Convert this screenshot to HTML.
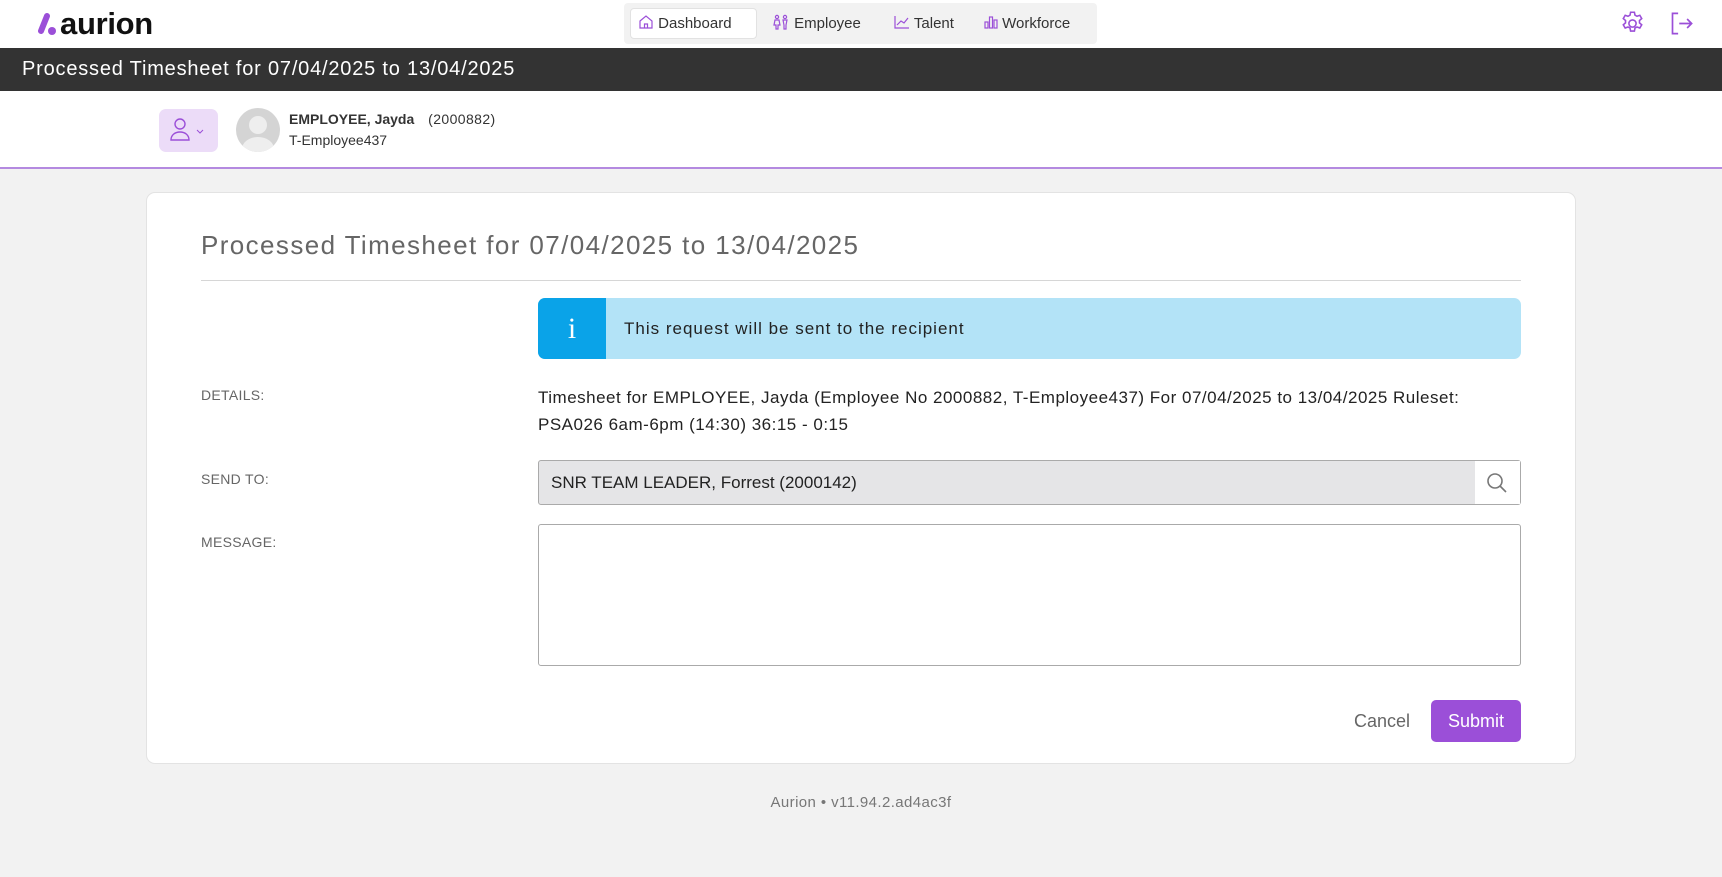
<!DOCTYPE html>
<html><head><meta charset="utf-8"><style>
*{box-sizing:border-box;margin:0;padding:0}
body{width:1722px;height:877px;background:#f2f2f2;font-family:"Liberation Sans",sans-serif;position:relative;overflow:hidden;color:#222}
.abs{position:absolute}
.top{left:0;top:0;width:1722px;height:48px;background:#fff}
.bar{left:0;top:48px;width:1722px;height:43px;background:#333;color:#fff;font-size:20px;line-height:43px;padding-left:22px;letter-spacing:0.8px}
.emp{left:0;top:91px;width:1722px;height:78px;background:#fff;border-bottom:2px solid #b48ae0}
.nav{left:624px;top:3px;width:473px;height:41px;background:#f2f2f2;border-radius:4px}
.nav span{position:absolute;top:0;line-height:41px;font-size:15px;color:#333}
.card{left:146px;top:192px;width:1430px;height:572px;background:#fff;border:1px solid #e3e3e3;border-radius:9px}
.lbl{font-size:14px;color:#666;left:201px;letter-spacing:0.3px}
</style></head><body>
<div class="abs top"></div>
<svg class="abs" style="left:38px;top:13px" width="22" height="24" viewBox="0 0 22 24"><path d="M9 3 3 18" stroke="#9b4fd8" stroke-width="6" stroke-linecap="round"/><circle cx="14" cy="18" r="4" fill="#9b4fd8"/></svg>
<div class="abs" style="left:60px;top:6px;font-size:31px;font-weight:bold;color:#111;letter-spacing:-0.3px">aurion</div>
<div class="abs nav">
 <div class="abs" style="left:6px;top:5px;width:127px;height:31px;background:#fff;border:1px solid #e2e2e2;border-radius:4px"></div>
 <span style="left:14px"><svg width="16" height="16" viewBox="0 0 16 16" style="vertical-align:-2px" fill="none" stroke="#9b4fd8" stroke-width="1.2"><path d="M2 7 8 2l6 5v7H2z M6.5 14v-4h3v4"/></svg> Dashboard</span>
 <span style="left:148px"><svg width="18" height="16" viewBox="0 0 18 16" style="vertical-align:-2px" fill="none" stroke="#9b4fd8" stroke-width="1.2"><circle cx="5" cy="3" r="1.6"/><circle cx="13" cy="3" r="1.6"/><path d="M3 6h4l1 5H6v4H4v-4H2zM11 6h4l-1 5v4h-2v-4z"/></svg> Employee</span>
 <span style="left:270px"><svg width="16" height="16" viewBox="0 0 16 16" style="vertical-align:-2px" fill="none" stroke="#9b4fd8" stroke-width="1.2"><path d="M1 2v12h14M3 11l4-4 3 2 4-5"/></svg> Talent</span>
 <span style="left:360px"><svg width="14" height="16" viewBox="0 0 14 16" style="vertical-align:-2px" fill="none" stroke="#9b4fd8" stroke-width="1.2"><rect x="1" y="8" width="3" height="6"/><rect x="5.5" y="3" width="3" height="11"/><rect x="10" y="6" width="3" height="8"/></svg> Workforce</span>
</div>
<svg class="abs" style="left:1619px;top:10px" width="27" height="27" viewBox="0 0 24 24" fill="none" stroke="#9b4fd8" stroke-width="1.4"><circle cx="12" cy="12" r="3.2"/><path d="M10.3 2h3.4l.5 2.6 1.8 1 2.5-.9 1.7 2.9-2 1.7v2.1l2 1.7-1.7 2.9-2.5-.9-1.8 1-.5 2.6h-3.4l-.5-2.6-1.8-1-2.5.9-1.7-2.9 2-1.7V9.3l-2-1.7 1.7-2.9 2.5.9 1.8-1z"/></svg>
<svg class="abs" style="left:1668px;top:10px" width="27" height="27" viewBox="0 0 24 24" fill="none" stroke="#9b4fd8" stroke-width="1.5"><path d="M9 3H4v18h5M10 12h11M17 8l4 4-4 4"/></svg>
<div class="abs bar">Processed Timesheet for 07/04/2025 to 13/04/2025</div>
<div class="abs emp"></div>
<div class="abs" style="left:159px;top:109px;width:59px;height:43px;background:#ecdcf8;border-radius:7px"></div>
<svg class="abs" style="left:168px;top:116px" width="40" height="28" viewBox="0 0 40 28" fill="none" stroke="#9b4fd8" stroke-width="1.4"><circle cx="12" cy="8" r="5"/><path d="M3 24c0-5 4-8 9-8s9 3 9 8z"/><path d="M29 14l3 3 3-3" stroke-width="1"/></svg>
<div class="abs" style="left:236px;top:108px;width:44px;height:44px;border-radius:50%;background:#d4d4d4;overflow:hidden"><div style="position:absolute;left:13px;top:8px;width:18px;height:18px;border-radius:50%;background:#eee"></div><div style="position:absolute;left:6px;top:29px;width:32px;height:24px;border-radius:50%;background:#eee"></div></div>
<div class="abs" style="left:289px;top:111px;font-size:14px;font-weight:bold;color:#333">EMPLOYEE, Jayda <span style="font-weight:normal;margin-left:10px;letter-spacing:0.4px">(2000882)</span></div>
<div class="abs" style="left:289px;top:132px;font-size:14px;color:#333">T-Employee437</div>
<div class="abs card"></div>
<div class="abs" style="left:201px;top:230px;font-size:26px;color:#666;letter-spacing:1.4px">Processed Timesheet for 07/04/2025 to 13/04/2025</div>
<div class="abs" style="left:201px;top:280px;width:1320px;height:1px;background:#d6d6d6"></div>
<div class="abs" style="left:538px;top:298px;width:983px;height:61px;background:#b3e3f7;border-radius:7px;overflow:hidden"><div style="width:68px;height:61px;background:#0aa3e8;color:#fff;font-size:30px;text-align:center;line-height:61px;font-family:'Liberation Serif',serif">i</div><div style="position:absolute;left:86px;top:0;line-height:61px;font-size:17px;color:#222;letter-spacing:1px">This request will be sent to the recipient</div></div>
<div class="abs lbl" style="top:387px">DETAILS:</div>
<div class="abs" style="left:538px;top:384px;width:990px;font-size:17px;line-height:27px;color:#222;letter-spacing:0.5px">Timesheet for EMPLOYEE, Jayda (Employee No 2000882, T-Employee437) For 07/04/2025 to 13/04/2025 Ruleset: PSA026 6am-6pm (14:30) 36:15 - 0:15</div>
<div class="abs lbl" style="top:471px">SEND TO:</div>
<div class="abs" style="left:538px;top:460px;width:983px;height:45px;background:#e5e5e7;border:1px solid #aaa;border-radius:3px;font-size:17px;line-height:43px;padding-left:12px">SNR TEAM LEADER, Forrest (2000142)<div style="position:absolute;right:0;top:0;width:45px;height:43px;background:#fff"><svg style="margin:11px" width="22" height="22" viewBox="0 0 22 22" fill="none" stroke="#777" stroke-width="1.6"><circle cx="9" cy="9" r="7"/><path d="M14 14l6 6"/></svg></div></div>
<div class="abs lbl" style="top:534px">MESSAGE:</div>
<div class="abs" style="left:538px;top:524px;width:983px;height:142px;background:#fff;border:1px solid #aaa;border-radius:3px"></div>
<div class="abs" style="left:1354px;top:711px;font-size:18px;color:#666">Cancel</div>
<div class="abs" style="left:1431px;top:700px;width:90px;height:42px;background:#9b4fd8;border-radius:5px;color:#fff;font-size:18px;text-align:center;line-height:42px">Submit</div>
<div class="abs" style="left:0;width:1722px;top:794px;text-align:center;font-size:15px;color:#777;letter-spacing:0.4px">Aurion • v11.94.2.ad4ac3f</div>
</body></html>
